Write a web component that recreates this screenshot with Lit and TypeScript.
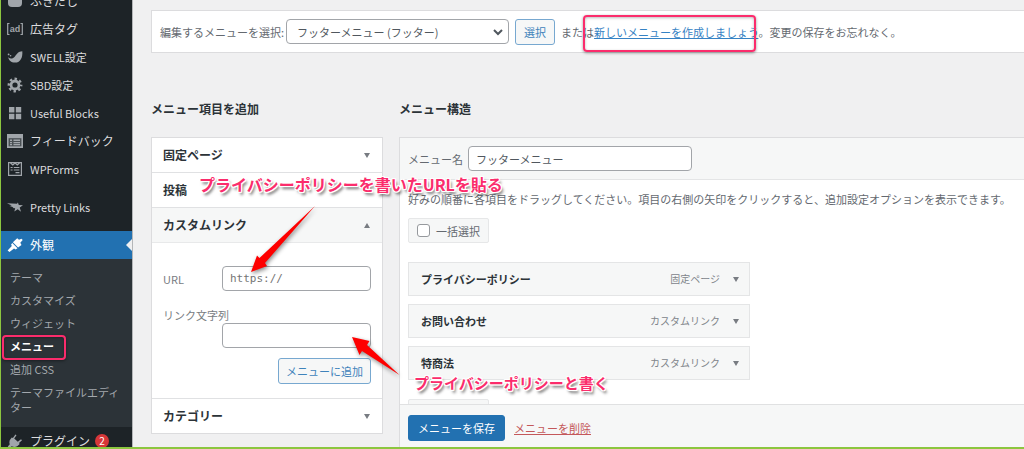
import { LitElement, html, svg, css, nothing } from "lit";
import { customElement, property } from "lit/decorators.js";
import { classMap } from "lit/directives/class-map.js";

const icons: Record<string, unknown> = {
  bubble: svg`<path d="M1 1h14v9q0 4-4 4H5q-4 0-4-4z"/>`,
  ad: svg`<path d="M2.500 2.500H.7v11h1.800M13.500 2.500h1.800v11h-1.800" fill="none" stroke="currentColor" stroke-width="1.200"/><text x="8" y="11" text-anchor="middle" font-family="Liberation Sans, sans-serif" font-size="9" font-weight="700">ad</text>`,
  swell: svg`<path d="M15.300 2.200C15.800 8 13.800 13.600 8 13.600c-4 0-6.300-2.300-6.800-5.300 1.900 1.800 4.700 1.700 6.500-.5C9.800 5 11.200 2.400 15.300 2.200z"/><circle cx="1.600" cy="5.400" r=".9"/><circle cx="3.600" cy="6.700" r=".8"/>`,
  gear: svg`<circle cx="8" cy="8" r="4" fill="none" stroke="currentColor" stroke-width="2.800"/><circle cx="8" cy="8" r="6.200" fill="none" stroke="currentColor" stroke-width="2.400" stroke-dasharray="2.430 2.440" stroke-dashoffset="1.200"/>`,
  blocks: svg`<path d="M2 2h5.400v5.400H2zM8.800 2h5.400v5.400H8.800zM2 8.800h5.400v5.400H2zM8.800 8.800h5.400v5.400H8.800z"/>`,
  feedback: svg`<path fill-rule="evenodd" d="M0 1h16v14H0zM1.700 5.200v8.100h12.600V5.200z"/><path d="M1.700 5.200h12.600v8.100H1.700z" opacity=".35"/><path d="M3 6.500h2v1.600H3zM6.500 6.500H13v1.600H6.500zM3 8.900h2v1.400H3zM6.500 8.900H13v1.400H6.500zM3 11.100h2v1.200H3zM6.500 11.100H13v1.200H6.500z"/>`,
  forms: svg`<path d="M1.600 1.600h12.800v12.800H1.600zM3.500 2l2.300 2L8 2l2.300 2 2.200-2M3.600 6.500h2M6.800 6.500h5.600M3.600 9h2M6.800 9h5.600M8.500 11.600h4" fill="none" stroke="currentColor" stroke-width="1.200"/>`,
  star: svg`<path d="M0 4.200l10 .6.900-1.300.9 2.600 4.200.2-3.300 2.300 1.300 4.200-3.300-2.500-3.400 2.300.9-3.300-2.700-.2 1-.9L2.500 7l2.200-.4z"/>`,
  brush: svg`<path d="M10.200 1.200l1.800 1.600 2.500-1 1.200 1.200-2.400 2.700 1.200 2.300-3.400 2.600L5.900 5.200zM5.300 5.900l5.200 5.300-1.900 1.200-1.600-1L2.500 15 .6 13.500 4.800 9 4.100 7.600z"/>`,
  plug: svg`<path d="M9.500 2.200L7.200 5.500l3.600 3.300L14 6.200l1 1-3 2.900.7 1-2.200 1.800c-2 1.500-4.200 1.300-5.700.3L2.400 15 .8 13.500l2-2.300C2 9.300 2.300 7.400 3.800 5.800l1-1.300 1.100.500 2.500-3.600z"/>`,
};

interface NavItem { label: string; icon: string; current?: boolean; badge?: number; gap?: boolean; latin?: boolean }

const navTop: NavItem[] = [
  { label: "ふきだし", icon: "bubble" },
  { label: "広告タグ", icon: "ad" },
  { label: "SWELL設定", icon: "swell", latin: true },
  { label: "SBD設定", icon: "gear", latin: true },
  { label: "Useful Blocks", icon: "blocks", latin: true },
  { label: "フィードバック", icon: "feedback" },
  { label: "WPForms", icon: "forms", latin: true },
  { label: "Pretty Links", icon: "star", gap: true, latin: true },
  { label: "外観", icon: "brush", gap: true, current: true },
];
const subItems = ["テーマ", "カスタマイズ", "ウィジェット", "メニュー", "追加 CSS", "テーマファイルエディター"];
const menuItems = [
  { title: "プライバシーポリシー", type: "固定ページ" },
  { title: "お問い合わせ", type: "カスタムリンク" },
  { title: "特商法", type: "カスタムリンク" },
];

const base = css`
  *, *::before, *::after { box-sizing: border-box; }
  ul, h2, h3, p { margin: 0; padding: 0; list-style: none; }
  button, input, select { font: inherit; margin: 0; }
  button { cursor: pointer; }
`;

const controls = css`
  .field {
    height: 25px; padding: 0 7px; border: 1px solid #a2a5a9; border-radius: 4px;
    background: #fff; color: #50575e; min-width: 0;
  }
  .btn {
    height: 26px; padding: 0 7px; border: 1px solid #77a8d0; border-radius: 3px;
    background: #f6f7f7; color: #3f83bb; white-space: nowrap;
  }
`;

@customElement("admin-nav")
export class AdminNav extends LitElement {
  static styles = [base, css`
    :host { display: block; background: #1d2327; border-right: 1px solid #b4b6b8; overflow: hidden; }
    .list { margin-top: -13px; }
    .gap { margin-top: 10px; }
    .item {
      position: relative; display: flex; align-items: center; gap: 7px; height: 28px; padding-left: 6px;
      color: #dcdcde; font-size: 12px; text-decoration: none; white-space: nowrap;
    }
    .latin { font-size: 11px; }
    .icon { width: 16px; height: 16px; fill: currentColor; color: #a0a5aa; flex: none; }
    .current { background: #2271b1; color: #fff; }
    .current .icon { color: #fff; }
    .current::after {
      content: ""; position: absolute; right: 0; top: 8px;
      border: 6px solid transparent; border-left: 0; border-right-color: #f0f0f1;
    }
    .badge {
      min-width: 14px; height: 14px; border-radius: 7px; background: #d63638; color: #fff;
      font-size: 10px; line-height: 14px; text-align: center; margin-left: -2px;
    }
    .sub { background: #2c3338; padding: 7px 8px 8px 9px; font-size: 11px; line-height: 15px; }
    .link { display: block; padding: 4px 0; color: #a3a8ad; text-decoration: none; }
    .active { color: #fff; font-weight: 700; }
  `];

  private item(i: NavItem) {
    return html`<li class=${classMap({ gap: !!i.gap })}>
      <a href="#" class=${classMap({ item: true, current: !!i.current, latin: !!i.latin })}>
        <svg class="icon" viewBox="0 0 16 16" aria-hidden="true">${icons[i.icon]}</svg>
        <span>${i.label}</span>${i.badge ? html`<span class="badge">${i.badge}</span>` : nothing}
      </a></li>`;
  }

  render() {
    return html`<nav><ul class="list">
      ${navTop.map((i) => this.item(i))}
      <li><ul class="sub">
        ${subItems.map((s) => html`<li><a href="#" class=${classMap({ link: true, active: s === "メニュー" })}>${s}</a></li>`)}
      </ul></li>
      ${this.item({ label: "プラグイン", icon: "plug", badge: 2 })}
    </ul></nav>`;
  }
}

@customElement("accordion-row")
export class AccordionRow extends LitElement {
  static styles = [base, controls, css`
    :host { display: block; }
    :host(:not(:first-of-type)) { border-top: 1px solid #e0e1e3; }
    .head {
      display: flex; align-items: center; justify-content: space-between; width: 100%; height: 34px;
      padding: 0 12px 0 11px; border: 0; background: #fff; color: #2c3338;
      font-size: 12px; font-weight: 700; text-align: left;
    }
    .open { background: #f6f7f7; height: 35px; border-bottom: 1px solid #e8e9ea; }
    .tri { border: 3px solid transparent; border-top: 5px solid #787c82; border-bottom: 0; }
    .open .tri { border-top: 0; border-bottom: 5px solid #787c82; }
  `];
  @property() label = "";
  @property({ type: Boolean }) open = false;

  render() {
    return html`<h3><button type="button" aria-expanded=${this.open} class=${classMap({ head: true, open: this.open })}>
        <span>${this.label}</span><span class="tri"></span>
      </button></h3>
      ${this.open ? html`<slot></slot>` : nothing}`;
  }
}

@customElement("app-root")
export class AppRoot extends LitElement {
  static styles = [base, controls, css`
    :host {
      position: relative; display: grid; grid-template-columns: 132px minmax(0, 1fr);
      height: 100vh; overflow: hidden; box-sizing: border-box;
      border-left: 1px solid #8cc63f; border-bottom: 2px solid #8cc63f;
      background: #f0f0f1; color: #646970;
      font: 11px/16px "Noto Sans CJK JP", sans-serif;
    }
    main { display: flex; flex-direction: column; min-height: 0; padding: 10px 0 0 18px; white-space: nowrap; }
    .picker {
      display: flex; align-items: center; gap: 6px; height: 43px; padding: 0 8px; flex: none;
      background: #fff; border: 1px solid #dcdcde; border-right: 0;
    }
    .picker label { margin-right: -4px; }
    .picker .btn { padding: 0 8px; }
    .select { position: relative; display: flex; width: 223px; }
    .select .field { appearance: none; width: 100%; padding: 0 10px; }
    .chev { position: absolute; right: 6px; top: 8px; width: 10px; height: 10px; fill: none; stroke: #50575e; stroke-width: 2; pointer-events: none; }
    .text-link { color: #3582c4; }
    .columns { flex: 1; min-height: 0; display: grid; grid-template-columns: 232px minmax(0, 1fr); column-gap: 16px; margin-top: 46px; }
    section { display: flex; flex-direction: column; min-height: 0; }
    h2 { color: #2c3338; font-size: 12px; line-height: 20px; font-weight: 700; margin-bottom: 18px; flex: none; }
    .box { border: 1px solid #dcdcde; background: #fff; }
    .form { display: flex; flex-direction: column; padding: 23px 11px 14px; height: 155px; }
    .row { display: flex; align-items: center; justify-content: space-between; }
    .form .field { width: 149px; }
    .mono { font-family: "DejaVu Sans Mono", monospace; }
    .form label { color: #787c82; }
    .stack { display: flex; flex-direction: column; margin-top: 16px; }
    .stack .field { align-self: flex-end; }
    .form .btn { align-self: flex-end; margin-top: 10px; }
    .editor { flex: 1; min-height: 0; display: flex; flex-direction: column; border: 1px solid #dcdcde; border-right: 0; border-bottom: 0; background: #fff; }
    .name { display: flex; align-items: center; gap: 5px; height: 42px; padding: 0 8px; background: #f6f7f7; border-bottom: 1px solid #e4e5e6; flex: none; }
    .name .field { width: 224px; }
    .body { flex: 1; min-height: 0; overflow: hidden; padding: 11px 8px 0; }
    .bulk {
      display: inline-flex; align-items: center; gap: 6px; height: 25px; padding: 0 8px;
      border: 1px solid #e6e7e8; border-radius: 2px; background: #f6f7f7; vertical-align: top;
    }
    .tick { appearance: none; width: 13px; height: 13px; border: 1px solid #96999d; border-radius: 3px; background: #fff; }
    .items { display: flex; flex-direction: column; gap: 8px; margin: 19px 0; max-width: 342px; }
    .entry {
      display: flex; align-items: center; gap: 13px; height: 34px; padding: 0 10px 0 12px;
      border: 1px solid #e4e5e6; background: #f6f7f7;
    }
    .entry b { flex: 1; color: #2c3338; }
    .kind { color: #80848a; font-size: 10px; }
    .tri { border: 3px solid transparent; border-top: 5px solid #787c82; border-bottom: 0; }
    .desc { margin-bottom: 11px; }
    .foot { display: flex; align-items: center; gap: 9px; height: 43px; padding: 3px 8px 0; background: #f6f7f7; border-top: 1px solid #e0e1e2; flex: none; }
    .save { height: 26px; padding: 0 9px; border: 1px solid #2271b1; border-radius: 3px; background: #2271b1; color: #fff; }
    .delete { color: #c4585a; }
    .mark { position: absolute; border: 2px solid #fb2c6c; border-radius: 4px; box-shadow: 0 1px 3px #0006, inset 0 1px 3px #0004; pointer-events: none; }
    .mark-link { left: 582px; top: 15px; width: 173px; height: 37px; }
    .mark-menu { left: 1px; top: 335px; width: 64px; height: 25px; }
    .arrows { position: absolute; left: -1px; top: 0; width: 430px; height: 400px; fill: #fe0000; pointer-events: none; filter: drop-shadow(1px 2px 2px #0007); }
    .note {
      position: absolute; color: #fb2c6c; font-size: 16px; line-height: 24px; font-weight: 700; white-space: nowrap; pointer-events: none;
      text-shadow: 1px 0 #fff, -1px 0 #fff, 0 1px #fff, 0 -1px #fff, 1px 1px #fff, -1px -1px #fff, 1px -1px #fff, -1px 1px #fff, 2px 3px 3px #0009;
    }
    .note-url { left: 198px; top: 172px; }
    .note-text { left: 413px; top: 371px; font-size: 15px; }
  `];

  private bulk(id: string) {
    return html`<label class="bulk" for=${id}><input class="tick" type="checkbox" id=${id}>一括選択</label>`;
  }

  render() {
    return html`
      <admin-nav></admin-nav>
      <main>
        <div class="picker">
          <label for="menu">編集するメニューを選択:</label>
          <span class="select">
            <select class="field" id="menu"><option>フッターメニュー (フッター)</option></select>
            <svg class="chev" viewBox="0 0 10 10" aria-hidden="true"><path d="M1 3l4 4 4-4"/></svg>
          </span>
          <button type="button" class="btn">選択</button>
          <span>または<a class="text-link" href="#">新しいメニューを作成しましょう</a>。変更の保存をお忘れなく。</span>
        </div>
        <div class="columns">
          <section>
            <h2>メニュー項目を追加</h2>
            <div class="box">
              <accordion-row label="固定ページ"></accordion-row>
              <accordion-row label="投稿"></accordion-row>
              <accordion-row label="カスタムリンク" open>
                <div class="form">
                  <div class="row"><label for="url">URL</label><input class="field mono" id="url" type="text" placeholder="https://"></div>
                  <div class="stack"><label for="text">リンク文字列</label><input class="field" id="text" type="text"></div>
                  <button type="button" class="btn">メニューに追加</button>
                </div>
              </accordion-row>
              <accordion-row label="カテゴリー"></accordion-row>
            </div>
          </section>
          <section>
            <h2>メニュー構造</h2>
            <div class="editor">
              <div class="name"><label for="name">メニュー名</label><input class="field" id="name" type="text" value="フッターメニュー"></div>
              <div class="body">
                <p class="desc">好みの順番に各項目をドラッグしてください。項目の右側の矢印をクリックすると、追加設定オプションを表示できます。</p>
                ${this.bulk("bulk-top")}
                <ul class="items">
                  ${menuItems.map((m) => html`<li class="entry"><b>${m.title}</b><span class="kind">${m.type}</span><span class="tri"></span></li>`)}
                </ul>
                ${this.bulk("bulk-bottom")}
              </div>
              <div class="foot"><button type="button" class="save">メニューを保存</button><a class="delete" href="#">メニューを削除</a></div>
            </div>
          </section>
        </div>
      </main>
      <div class="mark mark-link"></div>
      <div class="mark mark-menu"></div>
      <svg class="arrows" viewBox="0 0 430 400" aria-hidden="true">
        <path d="M251 272L257 255.500L259.500 258L315 206L265 263L267 266z"/>
        <path d="M352 337L369.500 341L367 345L399.500 375L362 351L359.500 355z"/>
      </svg>
      <div class="note note-url">プライバシーポリシーを書いたURLを貼る</div>
      <div class="note note-text">プライバシーポリシーと書く</div>
    `;
  }
}
